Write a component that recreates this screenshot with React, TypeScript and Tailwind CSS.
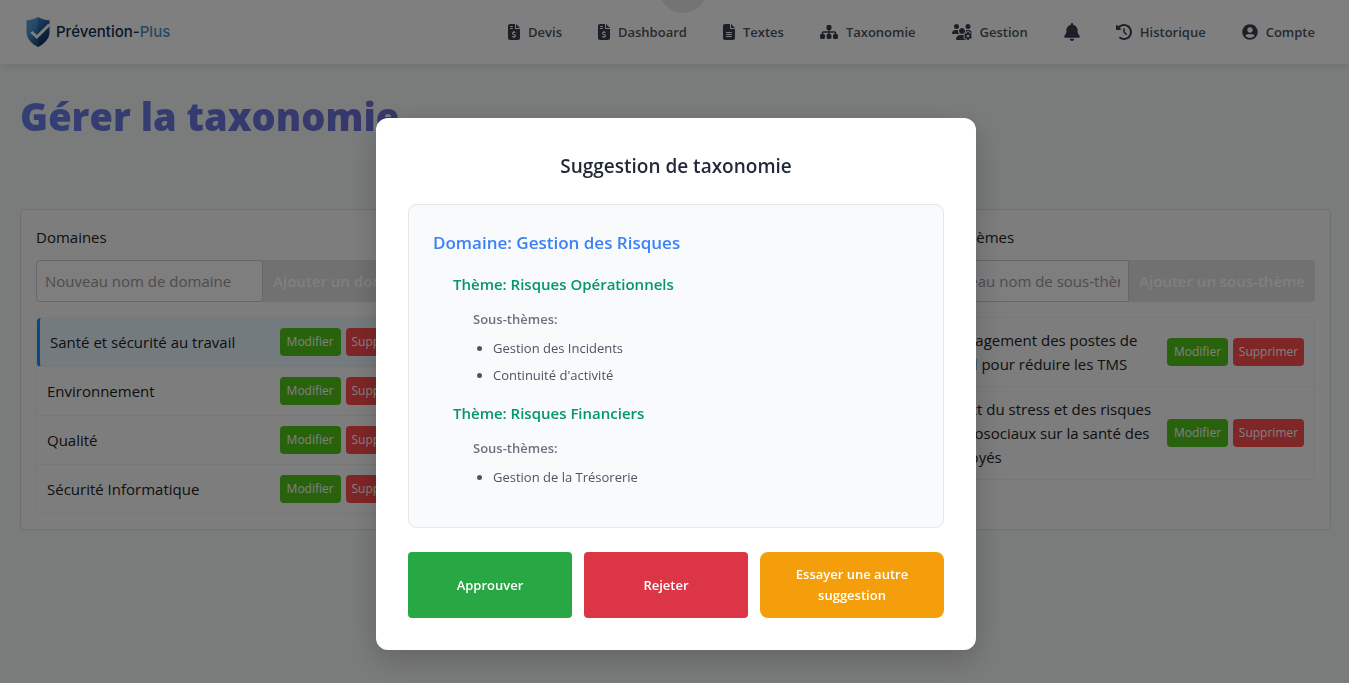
import React from "react";
import {
  FaFileInvoiceDollar,
  FaFileLines,
  FaSitemap,
  FaUsersGear,
  FaBell,
  FaClockRotateLeft,
} from "react-icons/fa6";
import { FaUserCircle } from "react-icons/fa";

type NavItem = { label: string; icon: React.ReactNode; iconOnly?: boolean };

const navItems: NavItem[] = [
  { label: "Devis", icon: <FaFileInvoiceDollar className="h-4 w-3" /> },
  { label: "Dashboard", icon: <FaFileInvoiceDollar className="h-4 w-3" /> },
  { label: "Textes", icon: <FaFileLines className="h-4 w-3" /> },
  { label: "Taxonomie", icon: <FaSitemap className="h-4 w-[18px]" /> },
  { label: "Gestion", icon: <FaUsersGear className="h-4 w-5" /> },
  { label: "Notifications", icon: <FaBell className="h-[18px] w-4" />, iconOnly: true },
  { label: "Historique", icon: <FaClockRotateLeft className="size-4" /> },
  { label: "Compte", icon: <FaUserCircle className="size-4" /> },
];

type Column = {
  title: string;
  placeholder: string;
  action: string;
  items: string[];
  selected?: number;
};

const domains: Column = {
  title: "Domaines",
  placeholder: "Nouveau nom de domaine",
  action: "Ajouter un domaine",
  items: ["Santé et sécurité au travail", "Environnement", "Qualité", "Sécurité Informatique"],
  selected: 0,
};

const subthemes: Column = {
  title: "Sous-thèmes",
  placeholder: "Nouveau nom de sous-thème",
  action: "Ajouter un sous-thème",
  items: [
    "Aménagement des postes de travail pour réduire les TMS",
    "Impact du stress et des risques psychosociaux sur la santé des employés",
  ],
};

const themes = [
  { name: "Risques Opérationnels", items: ["Gestion des Incidents", "Continuité d'activité"] },
  { name: "Risques Financiers", items: ["Gestion de la Trésorerie"] },
];

function Logo() {
  return (
    <a href="#" className="flex items-center gap-[6px]">
      <svg viewBox="0 0 24 30" className="h-[30px] w-6" aria-hidden="true">
        <defs>
          <linearGradient id="shieldLeft" x1="0" y1="0" x2="0.6" y2="1">
            <stop offset="0" stopColor="#5fa6dc" />
            <stop offset="0.5" stopColor="#4a94cf" />
            <stop offset="1" stopColor="#1c5690" />
          </linearGradient>
          <linearGradient id="shieldRight" x1="0" y1="0" x2="0.4" y2="1">
            <stop offset="0" stopColor="#3b86c4" />
            <stop offset="0.5" stopColor="#1f5a96" />
            <stop offset="1" stopColor="#082a55" />
          </linearGradient>
        </defs>
        <path d="M12 0C9 2 4.500 3 0.500 3.300V15C0.500 22 6 27 12 30Z" fill="url(#shieldLeft)" />
        <path d="M12 0C15 2 19.500 3 23.500 3.300V15C23.500 22 18 27 12 30Z" fill="url(#shieldRight)" />
        <path d="M5.500 15L10.800 20L23.500 7.500" fill="none" stroke="#fff" strokeWidth="3" />
      </svg>
      <span className="font-[Inter,sans-serif] text-[15px] font-medium text-[#12304f]">
        Prévention-<span className="text-[#4a90c8]">Plus</span>
      </span>
    </a>
  );
}

function Header() {
  return (
    <header className="relative flex h-16 items-center justify-between bg-white pr-[34px] pl-[26px] shadow-[0_2px_10px_rgba(0,0,0,0.1)]">
      <Logo />
      <div className="absolute -top-[35px] left-1/2 ml-2 size-12 -translate-x-1/2 rounded-full bg-[#e9e9ec]" />
      <nav className="flex items-center gap-9 text-[13px] font-semibold text-[#4b5563]">
        {navItems.map((item) => (
          <a
            key={item.label}
            href="#"
            aria-label={item.iconOnly ? item.label : undefined}
            className="flex items-center gap-2"
          >
            <span className="text-[#374151]">{item.icon}</span>
            {!item.iconOnly && <span className="pt-[2px]">{item.label}</span>}
          </a>
        ))}
      </nav>
    </header>
  );
}

const cardClass = "min-w-0 rounded border border-[#d9e0dd] bg-[#fafafa] p-[15px]";

function TaxonomyColumn({ column }: { column: Column }) {
  return (
    <section className={cardClass}>
      <h2 className="mb-[11px] leading-6">{column.title}</h2>
      <form className="mb-[15px] flex h-[42px]">
        <input
          type="text"
          aria-label={column.placeholder}
          placeholder={column.placeholder}
          className="min-w-0 flex-1 rounded-l border border-[#cfcfcf] bg-[#fdfdfd] px-2 placeholder:text-[#9a9a9a]"
        />
        <button
          type="button"
          disabled
          className="shrink-0 rounded-r bg-[#e2e2e2] px-[10px] font-semibold text-white"
        >
          {column.action}
        </button>
      </form>
      <ul className="rounded border border-b-0 border-[#f0f0f0]">
        {column.items.map((item, i) => (
          <li
            key={item}
            className={
              i === column.selected
                ? "flex items-center gap-[5px] rounded-l-sm border-b border-l-[3px] border-b-[#f0f0f0] border-l-[#1890ff] bg-[#e6f7ff] p-[10px]"
                : "flex items-center gap-[5px] border-b border-[#f0f0f0] p-[10px]"
            }
          >
            <span className="flex-1 leading-6">{item}</span>
            <button type="button" className="h-7 w-[61px] rounded bg-[#52c41a] text-[12px] text-white">
              Modifier
            </button>
            <button type="button" className="h-7 w-[71px] rounded bg-[#ff4d4f] text-[12px] text-white">
              Supprimer
            </button>
          </li>
        ))}
      </ul>
    </section>
  );
}

function SuggestionDialog() {
  return (
    <div className="fixed inset-0 flex items-start justify-center bg-black/50 pt-[118px] pl-[3px]">
      <div
        role="dialog"
        aria-modal="true"
        aria-labelledby="dialog-title"
        className="w-full max-w-[600px] rounded-xl bg-white p-8 shadow-[0_10px_30px_rgba(0,0,0,0.2)]"
      >
        <h2 id="dialog-title" className="mb-[22px] text-center text-[19px] leading-8 font-semibold text-[#1f2937]">
          Suggestion de taxonomie
        </h2>
        <div className="mb-6 rounded-lg border border-[#e5e7eb] bg-[#f9fafb] p-6">
          <h3 className="mb-4 text-[17px] leading-[27px] font-semibold text-[#3b82f6]">
            Domaine: Gestion des Risques
          </h3>
          {themes.map((theme) => (
            <div key={theme.name} className="pb-[9px] pl-5">
              <h4 className="mb-[13px] leading-6 font-semibold text-[#059669]">Thème: {theme.name}</h4>
              <div className="pl-5">
                <h5 className="mb-2 text-[13px] leading-[21px] font-semibold text-[#6b7280]">Sous-thèmes:</h5>
                <ul className="list-disc pl-5 text-[13px] leading-[21px] text-[#4b5563]">
                  {theme.items.map((item) => (
                    <li key={item} className="mb-[6px]">
                      {item}
                    </li>
                  ))}
                </ul>
              </div>
            </div>
          ))}
        </div>
        <div className="grid grid-cols-[164fr_164fr_184fr] gap-3 text-[13px] leading-[21px] font-semibold text-white">
          <button type="button" className="rounded bg-[#28a745] px-6 py-3">
            Approuver
          </button>
          <button type="button" className="rounded bg-[#dc3545] px-6 py-3">
            Rejeter
          </button>
          <button type="button" className="rounded-lg bg-[#f59e0b] px-6 py-3">
            Essayer une autre suggestion
          </button>
        </div>
      </div>
    </div>
  );
}

export default function App() {
  return (
    <div className="min-h-screen bg-[#f5f9f7] font-['Open_Sans',sans-serif] text-[15px] text-[#222]">
      <Header />
      <main className="pt-6 pr-[18px] pl-5">
        <h1 className="mb-[65px] bg-linear-to-r from-[#667eea] to-[#764ba2] bg-clip-text text-[38px] leading-[56px] font-extrabold text-transparent">
          Gérer la taxonomie
        </h1>
        <div className="grid grid-cols-3 gap-5">
          <TaxonomyColumn column={domains} />
          <section className={cardClass} />
          <TaxonomyColumn column={subthemes} />
        </div>
      </main>
      <SuggestionDialog />
    </div>
  );
}
